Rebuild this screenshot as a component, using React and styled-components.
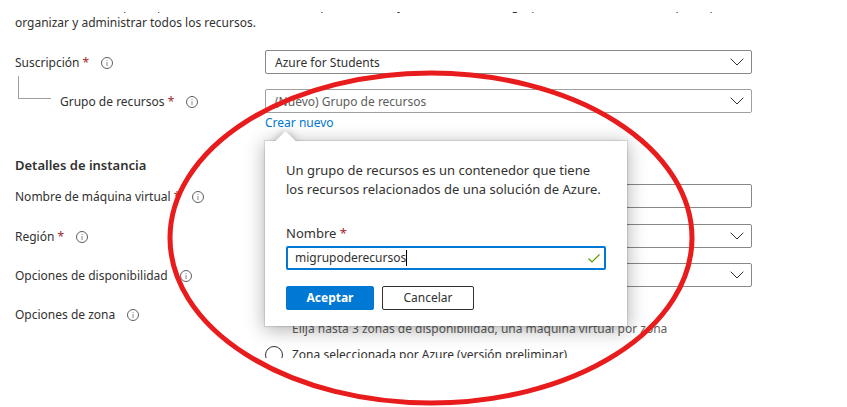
import React, { useState } from "react";
import styled, { createGlobalStyle } from "styled-components";

const GlobalStyle = createGlobalStyle`
  *, *::before, *::after { box-sizing: border-box; }
  body {
    margin: 0;
    background: #fff;
    color: #323130;
    font-family: "Noto Sans", "Open Sans", sans-serif;
    font-size: 12px;
    line-height: 18px;
  }
  button, input, select { font: inherit; color: inherit; }
`;

const Page = styled.main`
  position: relative;
  padding: 12px 95px 49px 15px;
`;

const Pane = styled.form`
  display: flex;
  flex-direction: column;
  height: 346px;
  margin: 0 -95px 0 -15px;
  padding: 0 95px 0 15px;
  overflow: hidden;
`;

const Intro = styled.div`
  display: flex;
  flex: none;
  align-items: flex-end;
  height: 19px;
  margin-bottom: 19px;
`;

const IntroText = styled.p`
  margin: 0 -20px 0 0;
  line-height: 17px;
`;

const Rows = styled.div`
  display: flex;
  flex-direction: column;
  gap: 14px;
`;

const Row = styled.div`
  display: grid;
  grid-template-columns: 250px minmax(0, 1fr);
  align-items: start;
  padding-bottom: ${(p) => (p.$loose ? "1px" : "0")};
`;

const LabelCell = styled.div`
  position: relative;
  display: flex;
  align-items: center;
  gap: 12px;
  height: 25px;
  padding-left: ${(p) => (p.$nested ? "45px" : "0")};
`;

const Required = styled.span`
  color: #a4262c;
`;

const Branch = styled.span`
  position: absolute;
  left: 3px;
  bottom: 15px;
  width: 33px;
  height: 23px;
  border-left: 1px solid #a19f9d;
  border-bottom: 1px solid #a19f9d;
`;

const InfoSvg = styled.svg`
  display: block;
  flex: none;
  width: 12px;
  height: 12px;
`;

const Control = styled.div`
  display: grid;
  align-items: center;
  & > * { grid-area: 1 / 1; }
`;

const Dropdown = styled.select`
  width: 100%;
  height: 24px;
  padding: 1px 30px 0 9px;
  appearance: none;
  background: #fff;
  border: 1px solid ${(p) => (p.$muted ? "#a19f9d" : "#8a8886")};
  border-radius: 2px;
  color: ${(p) => (p.$muted ? "#605e5c" : "#323130")};
`;

const Chevron = styled.svg`
  justify-self: end;
  width: 14px;
  height: 8px;
  margin-right: 8px;
  pointer-events: none;
`;

const TextBox = styled.input`
  width: 100%;
  height: 24px;
  padding: 0 9px;
  background: #fff;
  border: 1px solid #8a8886;
  border-radius: 2px;
`;

const Heading = styled.h2`
  margin: 24px 0 10px;
  font-size: 13px;
  font-weight: 600;
  line-height: 18px;
`;

const LinkAnchor = styled.div`
  position: relative;
  height: 19px;
  padding-top: 1px;
`;

const CreateLink = styled.a`
  color: #0078d4;
  text-decoration: none;
`;

const Callout = styled.div`
  position: absolute;
  z-index: 2;
  top: 28px;
  left: 0;
  width: 362px;
  background: #fff;
  box-shadow: 0 0 1px 1px rgba(0, 0, 0, 0.1), 0 3px 18px 1px rgba(0, 0, 0, 0.3);
  &::before {
    content: "";
    position: absolute;
    top: -7px;
    left: 13px;
    width: 15px;
    height: 15px;
    background: #fff;
    box-shadow: 0 0 10px rgba(0, 0, 0, 0.3);
    transform: rotate(45deg);
  }
`;

const CalloutBody = styled.div`
  position: relative;
  display: flex;
  flex-direction: column;
  padding: 20px 21px 16px;
  background: #fff;
  font-size: 13px;
`;

const CalloutText = styled.p`
  margin: 0 -10px 25px 0;
  line-height: 19px;
`;

const CalloutLabel = styled.label`
  margin-bottom: 4px;
  line-height: 18px;
`;

const NameBox = styled.div`
  display: flex;
  align-items: center;
  height: 24px;
  padding: 0 4px 0 7px;
  border: 2px solid #0078d4;
  border-radius: 2px;
  font-size: 12px;
`;

const NameInput = styled.input`
  field-sizing: content;
  height: 18px;
  padding: 0;
  border: 0;
  outline: 0;
  background: none;
  caret-color: transparent;
`;

const Caret = styled.span`
  width: 1px;
  height: 16px;
  background: #000;
`;

const Tick = styled.svg`
  width: 12px;
  height: 9px;
  margin-left: auto;
`;

const Buttons = styled.div`
  display: flex;
  gap: 8px;
  margin-top: 16px;
`;

const Button = styled.button`
  width: ${(p) => (p.$primary ? "88px" : "92px")};
  height: 24px;
  padding: 0;
  border: 1px solid ${(p) => (p.$primary ? "#0078d4" : "#323130")};
  border-radius: 2px;
  background: ${(p) => (p.$primary ? "#0078d4" : "#fff")};
  color: ${(p) => (p.$primary ? "#fff" : "#323130")};
  font-size: 12px;
  font-weight: ${(p) => (p.$primary ? 700 : 400)};
`;

const ZoneOptions = styled.div`
  display: flex;
  flex-direction: column;
  gap: 8px;
  padding-top: 18px;
`;

const ZoneHint = styled.div`
  padding-left: 27px;
  color: #605e5c;
`;

const RadioLabel = styled.label`
  display: flex;
  align-items: center;
  gap: 9px;
`;

const Radio = styled.input`
  width: 18px;
  height: 18px;
  margin: 0;
  appearance: none;
  border: 1px solid #323130;
  border-radius: 50%;
`;

const Ring = styled.svg`
  position: absolute;
  z-index: 3;
  top: 70px;
  left: 167px;
  width: 528px;
  height: 336px;
  pointer-events: none;
`;

function Info() {
  return (
    <InfoSvg viewBox="0 0 12 12" fill="none" aria-hidden="true">
      <circle cx="6" cy="6" r="5.5" stroke="#605e5c" />
      <path d="M6 5v4M6 3v1" stroke="#8a8886" />
    </InfoSvg>
  );
}

function FieldLabel({ htmlFor, text, required, nested }) {
  return (
    <LabelCell $nested={nested}>
      {nested && <Branch />}
      <label htmlFor={htmlFor}>
        {text}
        {required && <Required> *</Required>}
      </label>
      <Info />
    </LabelCell>
  );
}

function SelectField({ id, value, muted }) {
  return (
    <Control>
      <Dropdown id={id} $muted={muted}>
        <option>{value}</option>
      </Dropdown>
      <Chevron viewBox="0 0 14 8" fill="none" aria-hidden="true">
        <path d="M.7.7 7 7 13.3.7" stroke="#323130" />
      </Chevron>
    </Control>
  );
}

function CreateGroup() {
  const [name, setName] = useState("migrupoderecursos");
  return (
    <Callout role="dialog" aria-label="Crear nuevo">
      <CalloutBody>
        <CalloutText>
          Un grupo de recursos es un contenedor que tiene
          <br />
          los recursos relacionados de una solución de Azure.
        </CalloutText>
        <CalloutLabel htmlFor="group-name">
          Nombre <Required>*</Required>
        </CalloutLabel>
        <NameBox>
          <NameInput id="group-name" value={name} onChange={(e) => setName(e.target.value)} />
          <Caret />
          <Tick viewBox="0 0 12 9" fill="none" aria-hidden="true">
            <path d="M.5 4.5 4 8 11.5.5" stroke="#57a300" strokeWidth="1.2" />
          </Tick>
        </NameBox>
        <Buttons>
          <Button type="button" $primary>Aceptar</Button>
          <Button type="button">Cancelar</Button>
        </Buttons>
      </CalloutBody>
    </Callout>
  );
}

export default function App() {
  return (
    <Page>
      <GlobalStyle />
      <Pane>
        <Intro>
          <IntroText>
            Seleccione la suscripción para administrar recursos implementados y los costes. Use los grupos de recursos como carpetas para
            <br />
            organizar y administrar todos los recursos.
          </IntroText>
        </Intro>
        <Rows>
          <Row>
            <FieldLabel htmlFor="subscription" text="Suscripción" required />
            <SelectField id="subscription" value="Azure for Students" />
          </Row>
          <Row>
            <FieldLabel htmlFor="group" text="Grupo de recursos" required nested />
            <div>
              <SelectField id="group" value="(Nuevo) Grupo de recursos" muted />
              <LinkAnchor>
                <CreateLink href="#crear">Crear nuevo</CreateLink>
                <CreateGroup />
              </LinkAnchor>
            </div>
          </Row>
        </Rows>
        <Heading>Detalles de instancia</Heading>
        <Rows>
          <Row $loose>
            <FieldLabel htmlFor="vm-name" text="Nombre de máquina virtual" required />
            <TextBox id="vm-name" />
          </Row>
          <Row>
            <FieldLabel htmlFor="region" text="Región" required />
            <SelectField id="region" />
          </Row>
          <Row>
            <FieldLabel htmlFor="availability" text="Opciones de disponibilidad" />
            <SelectField id="availability" />
          </Row>
          <Row>
            <FieldLabel htmlFor="zone" text="Opciones de zona" />
            <ZoneOptions>
              <ZoneHint>Elija hasta 3 zonas de disponibilidad, una máquina virtual por zona</ZoneHint>
              <RadioLabel>
                <Radio type="radio" id="zone" name="zone" />
                Zona seleccionada por Azure (versión preliminar)
              </RadioLabel>
            </ZoneOptions>
          </Row>
        </Rows>
      </Pane>
      <Ring viewBox="0 0 528 336" fill="none" aria-hidden="true">
        <ellipse cx="264" cy="168" rx="261" ry="165" stroke="#e81c1c" strokeWidth="5" />
      </Ring>
    </Page>
  );
}
